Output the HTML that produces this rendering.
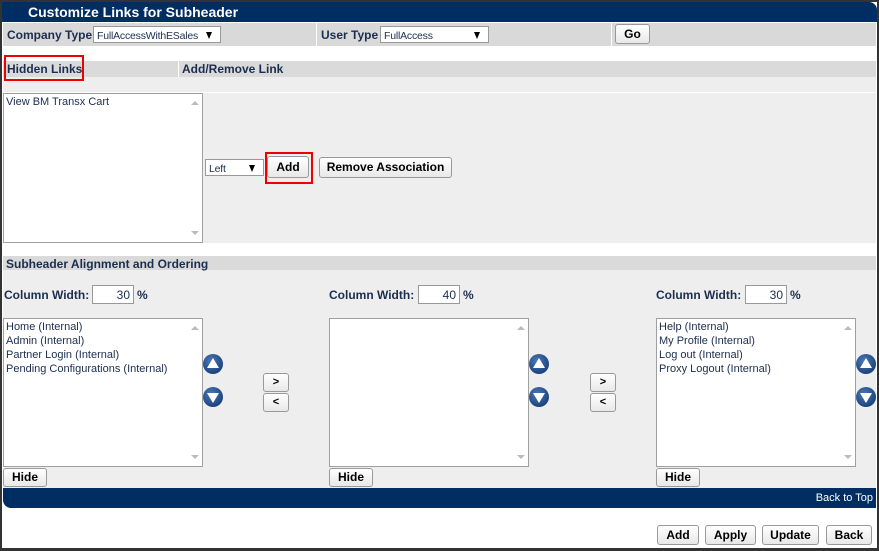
<!DOCTYPE html>
<html><head><style>
*{margin:0;padding:0;box-sizing:border-box}
body{width:879px;height:551px;background:#333;position:relative;overflow:hidden;font-family:"Liberation Sans",Arial,sans-serif;color:#1b2e4f}
.a{position:absolute}
.b{font-weight:bold;font-size:12px}
.btn{position:absolute;background:linear-gradient(#fff,#e8e8e8);border:1px solid #999;border-radius:3px;font:bold 12px "Liberation Sans",Arial,sans-serif;color:#000;text-align:center}
.sel{position:absolute;background:#fff;border:1px solid #999;font-size:10.5px;letter-spacing:-0.2px;color:#1b2e4f;padding:3px 18px 0 3px;line-height:12px;white-space:nowrap;overflow:hidden}
.sel:after{content:"";position:absolute;right:8px;top:5px;border-left:3.5px solid transparent;border-right:3.5px solid transparent;border-top:7px solid #000}
.lb{position:absolute;background:#fff;border:1px solid #a0a0a0;font-size:11px;line-height:14px;padding:1px 2px}
.sb{position:absolute;right:0;top:0;bottom:0;width:15px;background:transparent}
.sb:before{content:"";position:absolute;left:4px;top:7px;border:4px solid transparent;border-bottom:4px solid #bbb;border-top:0}
.sb:after{content:"";position:absolute;left:4px;bottom:7px;border:4px solid transparent;border-top:4px solid #bbb;border-bottom:0}
.inp{position:absolute;background:#fff;border:1px solid #999;font-size:12px;text-align:right;padding:2px 3px;height:19px;color:#1b2e4f}
.ic{position:absolute;width:20px;height:20px;border-radius:50%;background:radial-gradient(circle at 40% 35%,#4b79b6,#1e4580 70%,#173460)}
.up:after{content:"";position:absolute;left:4px;top:4px;border-left:6px solid transparent;border-right:6px solid transparent;border-bottom:10px solid #fff}
.dn:after{content:"";position:absolute;left:4px;top:6px;border-left:6px solid transparent;border-right:6px solid transparent;border-top:10px solid #fff}
</style></head><body>
<div class="a" style="left:2px;top:2px;width:875px;height:546px;background:#fff"></div>
<div class="a" style="left:2px;top:2px;width:875px;height:20px;background:#002d62;border-top-right-radius:8px"></div>
<div class="a" style="left:28px;top:4px;color:#fff;font-weight:bold;font-size:14px">Customize Links for Subheader</div>
<div class="a" style="left:3px;top:23px;width:873px;height:23px;background:#d9d9d9"></div>
<div class="a" style="left:316px;top:23px;width:1px;height:23px;background:#fff"></div>
<div class="a" style="left:611px;top:23px;width:1px;height:23px;background:#fff"></div>
<div class="a b" style="left:7px;top:28px">Company Type</div>
<div class="sel" style="left:93px;top:26px;width:128px;height:17px">FullAccessWithESales</div>
<div class="a b" style="left:321px;top:28px">User Type</div>
<div class="sel" style="left:380px;top:26px;width:109px;height:17px">FullAccess</div>
<div class="btn" style="left:615px;top:24px;width:35px;height:20px;line-height:18px">Go</div>
<div class="a" style="left:3px;top:61px;width:873px;height:16px;background:#dadada"></div>
<div class="a" style="left:178px;top:61px;width:1px;height:16px;background:#fff"></div>
<div class="a" style="left:3px;top:77px;width:873px;height:166px;background:#eeeeee"></div>
<div class="a" style="left:3px;top:92px;width:873px;height:1px;background:#fff"></div>
<div class="a b" style="left:7px;top:62px">Hidden Links</div>
<div class="a" style="left:4px;top:55px;width:80px;height:26px;border:2px solid #e00"></div>
<div class="a b" style="left:182px;top:62px">Add/Remove Link</div>
<div class="lb" style="left:3px;top:93px;width:200px;height:150px">View BM Transx Cart<div class="sb"></div></div>
<div class="sel" style="left:205px;top:159px;width:59px;height:17px">Left</div>
<div class="btn" style="left:267px;top:156px;width:42px;height:22px;line-height:20px">Add</div>
<div class="a" style="left:265px;top:152px;width:48px;height:32px;border:2px solid #e00"></div>
<div class="btn" style="left:319px;top:157px;width:133px;height:21px;line-height:19px">Remove Association</div>
<div class="a" style="left:3px;top:256px;width:873px;height:14px;background:#dadada"></div>
<div class="a" style="left:3px;top:270px;width:873px;height:218px;background:#eeeeee"></div>
<div class="a b" style="left:6px;top:257px">Subheader Alignment and Ordering</div>
<div class="a b" style="left:4px;top:288px">Column Width:</div>
<div class="inp" style="left:92px;top:285px;width:42px">30</div>
<div class="a b" style="left:137px;top:288px">%</div>
<div class="a b" style="left:329px;top:288px">Column Width:</div>
<div class="inp" style="left:418px;top:285px;width:42px">40</div>
<div class="a b" style="left:463px;top:288px">%</div>
<div class="a b" style="left:656px;top:288px">Column Width:</div>
<div class="inp" style="left:745px;top:285px;width:42px">30</div>
<div class="a b" style="left:790px;top:288px">%</div>
<div class="lb" style="left:3px;top:318px;width:200px;height:149px">Home (Internal)<br>Admin (Internal)<br>Partner Login (Internal)<br>Pending Configurations (Internal)<div class="sb"></div></div>
<div class="lb" style="left:329px;top:318px;width:200px;height:149px"><div class="sb"></div></div>
<div class="lb" style="left:656px;top:318px;width:200px;height:149px">Help (Internal)<br>My Profile (Internal)<br>Log out (Internal)<br>Proxy Logout (Internal)<div class="sb"></div></div>
<div class="ic up" style="left:203px;top:354px"></div><div class="ic dn" style="left:203px;top:387px"></div>
<div class="ic up" style="left:529px;top:354px"></div><div class="ic dn" style="left:529px;top:387px"></div>
<div class="ic up" style="left:856px;top:354px"></div><div class="ic dn" style="left:856px;top:387px"></div>
<div class="btn" style="left:263px;top:373px;width:26px;height:19px;line-height:17px;font-size:11px">&gt;</div>
<div class="btn" style="left:263px;top:393px;width:26px;height:19px;line-height:17px;font-size:11px">&lt;</div>
<div class="btn" style="left:590px;top:373px;width:26px;height:19px;line-height:17px;font-size:11px">&gt;</div>
<div class="btn" style="left:590px;top:393px;width:26px;height:19px;line-height:17px;font-size:11px">&lt;</div>
<div class="btn" style="left:3px;top:468px;width:44px;height:19px;line-height:17px">Hide</div>
<div class="btn" style="left:329px;top:468px;width:44px;height:19px;line-height:17px">Hide</div>
<div class="btn" style="left:656px;top:468px;width:44px;height:19px;line-height:17px">Hide</div>
<div class="a" style="left:3px;top:488px;width:873px;height:20px;background:#002d62;border-bottom-left-radius:8px"></div>
<div class="a" style="right:6px;top:492px;color:#fff;font-size:11px">Back to Top</div>
<div class="btn" style="left:657px;top:525px;width:42px;height:20px;line-height:18px">Add</div>
<div class="btn" style="left:705px;top:525px;width:51px;height:20px;line-height:18px">Apply</div>
<div class="btn" style="left:762px;top:525px;width:57px;height:20px;line-height:18px">Update</div>
<div class="btn" style="left:826px;top:525px;width:46px;height:20px;line-height:18px">Back</div>
</body></html>
